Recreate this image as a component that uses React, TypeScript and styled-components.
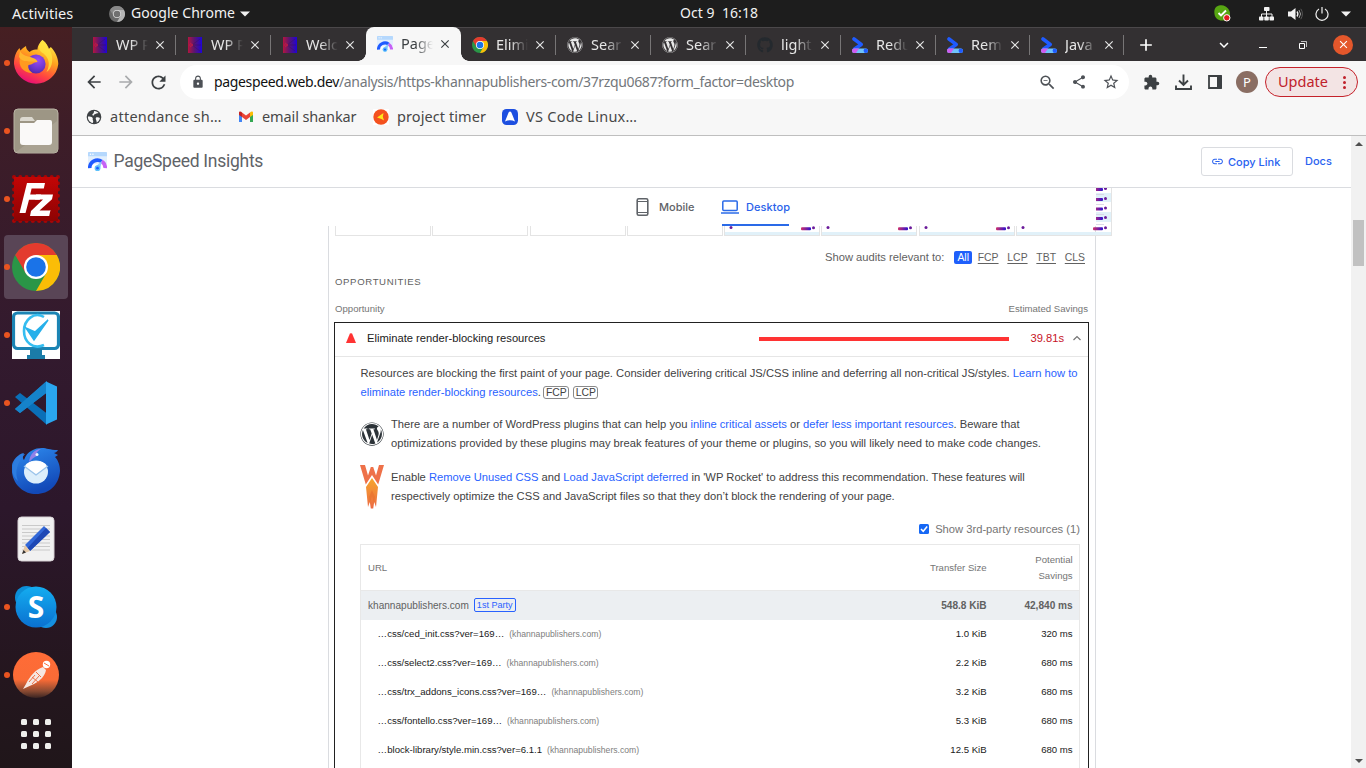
import React from "react";
import styled, { createGlobalStyle } from "styled-components";
import {
  MdArrowBack, MdArrowForward, MdRefresh, MdLock, MdOutlineZoomOut, MdShare, MdStarBorder,
  MdExtension, MdLink, MdClose, MdAdd, MdExpandMore,
} from "react-icons/md";
import { FaWordpress, FaGithub } from "react-icons/fa";

const ui = `"Noto Sans", "Open Sans", sans-serif`;
const arial = `"Liberation Sans", Arial, sans-serif`;
const product = `Inter, Roboto, sans-serif`;

const GlobalStyle = createGlobalStyle`
  * { box-sizing: border-box; }
  body { margin: 0; background: #fff; overflow: hidden; }
  svg { display: block; flex: none; }
`;

const Screen = styled.div`
  width: 1366px;
  height: 768px;
  overflow: hidden;
  display: flex;
  flex-direction: column;
  font-family: ${ui};
`;

/* ---------- GNOME top bar ---------- */
const TopBar = styled.header`
  height: 27px;
  flex: none;
  background: #1d1d1d;
  color: #f2f2f2;
  display: grid;
  grid-template-columns: 680px auto 1fr;
  align-items: center;
  font-size: 14px;
  white-space: pre;
`;
const TopLeft = styled.div`
  display: flex;
  align-items: center;
  padding-left: 12px;
`;
const Activities = styled.span`
  width: 97px;
  padding-bottom: 2px;
  font-size: 14.5px;
  letter-spacing: 0.1px;
`;
const AppName = styled.span`
  margin: 0 5px 0 6px;
  padding-bottom: 2px;
  letter-spacing: 0.05px;
`;
const Clock = styled.span`
  padding-bottom: 2px;
  letter-spacing: 0.05px;
`;
const Tray = styled.div`
  display: flex;
  justify-content: flex-end;
  padding-right: 9px;
`;
const Slot = styled.div<{ $w: number; $color?: string }>`
  width: ${(p) => p.$w}px;
  flex: none;
  display: flex;
  align-items: center;
  justify-content: center;
  color: ${(p) => p.$color || "inherit"};
`;

/* ---------- dock ---------- */
const Desktop = styled.div`
  flex: 1;
  display: flex;
  min-height: 0;
`;
const Dock = styled.nav`
  width: 72px;
  flex: none;
  padding-top: 2px;
  background: linear-gradient(#461f22 0%, #3d1d28 14%, #331a2e 42%, #2c172b 65%, #24161e 88%, #20161a 100%);
`;
const DockItem = styled.div<{ $active?: boolean }>`
  height: 64px;
  margin: 2px 4px 4px;
  border-radius: 4px;
  display: flex;
  align-items: center;
  background: ${(p) => (p.$active ? "#594556" : "transparent")};
`;
const RunningDot = styled.i<{ $on: boolean }>`
  width: 6px;
  height: 6px;
  border-radius: 50%;
  margin-right: 2px;
  background: ${(p) => (p.$on ? "#e95420" : "transparent")};
`;
const AppGrid = styled.div`
  display: grid;
  grid-template-columns: repeat(3, 6px);
  gap: 6px;
  margin: 12px 0 0 21px;
`;
const AppDot = styled.i`
  height: 6px;
  border-radius: 1.5px;
  background: #efefec;
`;

/* ---------- browser chrome ---------- */
const Browser = styled.main`
  flex: 1;
  min-width: 0;
  display: flex;
  flex-direction: column;
`;
const TabStrip = styled.div`
  height: 34px;
  flex: none;
  background: #333032;
  border-top: 1px solid #4b484a;
  display: flex;
  padding-left: 9px;
  color: #fff;
`;
const Tab = styled.div<{ $active?: boolean; $line?: boolean; $w?: number }>`
  position: relative;
  width: ${(p) => p.$w || 95}px;
  flex: none;
  display: flex;
  align-items: center;
  padding-left: 11px;
  height: ${(p) => (p.$active ? 34 : 33)}px;
  margin-top: ${(p) => (p.$active ? -1 : 0)}px;
  color: ${(p) => (p.$active ? "#3c4043" : "#e6e6e6")};
  background: ${(p) => (p.$active ? "#f7f7f7" : "transparent")};
  border-radius: 8px 8px 0 0;
  &::after {
    content: "";
    position: absolute;
    right: 0;
    top: 7px;
    width: 1px;
    height: 20px;
    background: ${(p) => (p.$line ? "#777576" : "transparent")};
  }
`;
const Flare = styled.i<{ $side: "left" | "right" }>`
  position: absolute;
  bottom: 0;
  ${(p) => p.$side}: -8px;
  width: 8px;
  height: 8px;
  background: radial-gradient(circle at ${(p) => (p.$side === "left" ? "0 0" : "100% 0")}, transparent 7.5px, #f7f7f7 8px);
`;
const TabTitle = styled.span`
  width: 32px;
  margin: 0 5px 0 8px;
  padding-bottom: 2px;
  overflow: hidden;
  white-space: pre;
  font-size: 14.5px;
  line-height: 22px;
  mask-image: linear-gradient(90deg, #000 45%, transparent 100%);
`;
const WindowControls = styled.div`
  margin-left: auto;
  display: flex;
`;
const Minimise = styled.i`
  width: 8px;
  height: 1px;
  margin-top: 5px;
  background: #fff;
`;
const CloseWindow = styled.div`
  width: 20px;
  height: 20px;
  border-radius: 50%;
  background: #e4572b;
  display: grid;
  place-items: center;
`;
const Toolbar = styled.div`
  height: 38px;
  flex: none;
  background: #f7f7f7;
  display: flex;
  align-items: center;
  padding: 4px 8px 0 6px;
  color: #3c4043;
`;
const Omnibox = styled.div`
  width: 949px;
  height: 34px;
  margin: 0 6px;
  border-radius: 17px;
  background: #fff;
  display: flex;
  align-items: center;
  padding: 0 2px 0 10px;
  color: #4d5156;
`;
const Url = styled.span`
  flex: 1;
  margin-left: 8px;
  padding-bottom: 2px;
  font-size: 14px;
  letter-spacing: -0.355px;
  color: #73777b;
  white-space: nowrap;
  b { font-weight: 400; color: #111; }
`;
const Avatar = styled.div`
  width: 22px;
  height: 22px;
  border-radius: 50%;
  background: #8a6e63;
  color: #fff;
  font-size: 13px;
  line-height: 22px;
  text-align: center;
`;
const UpdateButton = styled.div`
  width: 93px;
  height: 30px;
  margin-left: 2px;
  border: 1px solid #c5222b;
  border-radius: 15px;
  background: #f3e4e4;
  color: #c0212b;
  display: flex;
  align-items: center;
  justify-content: space-between;
  padding: 0 11px 0 12px;
  font-size: 14.5px;
`;
const UpdateLabel = styled.span`
  padding-bottom: 2px;
`;
const Dots = styled.div`
  display: grid;
  gap: 2px;
  i { width: 3px; height: 3px; border-radius: 50%; background: #c0212b; }
`;
const Bookmarks = styled.div`
  height: 37px;
  flex: none;
  background: #f7f7f7;
  border-bottom: 1px solid #bfbfbf;
  display: flex;
  align-items: center;
  padding-left: 14px;
  color: #474747;
  font-size: 14.5px;
`;
const Bookmark = styled.div<{ $w: number }>`
  width: ${(p) => p.$w}px;
  display: flex;
  align-items: center;
  gap: 8px;
`;
const BookmarkName = styled.span<{ $ls: number }>`
  padding-bottom: 2px;
  white-space: nowrap;
  letter-spacing: ${(p) => p.$ls}px;
`;

/* ---------- page ---------- */
const Viewport = styled.div`
  flex: 1;
  min-height: 0;
  display: flex;
`;
const Page = styled.div`
  width: 1279px;
  flex: none;
  overflow: hidden;
  background: #fff;
`;
const PageHeader = styled.div`
  height: 52px;
  border-bottom: 1px solid #dadce0;
  display: flex;
  align-items: center;
  padding: 0 19px 1px 16px;
  font-family: ${product};
  font-size: 11px;
  font-weight: 500;
  color: #2962f0;
`;
const ProductName = styled.span`
  flex: 1;
  margin-left: 6.5px;
  font-family: Roboto, sans-serif;
  font-size: 17.5px;
  font-weight: 400;
  letter-spacing: -0.27px;
  color: #5f6368;
`;
const CopyLink = styled.div`
  width: 92px;
  height: 29px;
  border: 1px solid #dadce0;
  border-radius: 3px;
  margin-right: 12px;
  display: flex;
  align-items: center;
  padding: 1px 0 0 9px;
  gap: 4px;
`;
const Docs = styled.span`
  width: 27px;
`;
const FilmArea = styled.div`
  display: grid;
  height: 48px;
  padding-left: 256px;
`;
const Film = styled.div`
  grid-area: 1 / 1;
  width: 784px;
  height: 48px;
  padding-left: 7px;
  display: grid;
  grid-template-columns: repeat(8, 96px);
  grid-template-rows: 48px;
  justify-content: space-between;
`;
const Frame = styled.div`
  border: 1px solid #e4e4e4;
  border-top: 0;
  overflow: hidden;
`;
const DeviceNav = styled.div`
  grid-area: 1 / 1;
  z-index: 1;
  width: 768px;
  height: 38px;
  background: #fff;
  display: flex;
  padding-left: 308px;
  font-family: ${product};
  font-size: 11px;
  font-weight: 500;
`;
const DeviceTab = styled.div<{ $active?: boolean; $w: number }>`
  width: ${(p) => p.$w}px;
  padding-top: 2px;
  display: flex;
  align-items: center;
  gap: ${(p) => (p.$active ? 7 : 10)}px;
  margin-right: 19px;
  letter-spacing: ${(p) => (p.$active ? 0.1 : 0)}px;
  color: ${(p) => (p.$active ? "#2962ea" : "#5f6368")};
  border-bottom: 2px solid ${(p) => (p.$active ? "#2a6ae8" : "transparent")};
  white-space: nowrap;
  svg { margin-left: ${(p) => (p.$active ? -1 : 0)}px; }
`;
const Report = styled.section`
  width: 768px;
  height: 560px;
  margin: -10px 0 0 256px;
  padding: 22px 6px 0 5px;
  border: solid #dadce0;
  border-width: 0 1px;
  font-family: ${arial};
  font-size: 11.2px;
  line-height: 19px;
  color: #424242;
`;
const Filters = styled.div`
  display: flex;
  justify-content: flex-end;
  align-items: center;
  padding-right: 1px;
  height: 19px;
  color: #616161;
`;
const Filter = styled.span<{ $on?: boolean }>`
  font-size: 10.4px;
  line-height: 13px;
  padding: 0 3px;
  margin-left: ${(p) => (p.$on ? 10 : 2.8)}px;
  border-radius: 2px;
  text-decoration: ${(p) => (p.$on ? "none" : "underline")};
  text-underline-offset: 1.5px;
  background: ${(p) => (p.$on ? "#1f5ffb" : "transparent")};
  color: ${(p) => (p.$on ? "#fff" : "#616161")};
`;
const GroupTitle = styled.div`
  margin: 5px 0 0 1px;
  font-size: 9.6px;
  letter-spacing: 0.63px;
  color: #616161;
`;
const ColumnTitles = styled.div`
  display: flex;
  justify-content: space-between;
  margin: 8px 1px 4px;
  font-size: 9.6px;
  color: #757575;
`;
const Audit = styled.div`
  height: 500px;
  border: 1px solid #212121;
`;
const AuditHeader = styled.div`
  height: 34px;
  border-bottom: 1px solid #e6e6e6;
  display: flex;
  align-items: center;
  padding: 0 6px 3px 11px;
  color: #212121;
`;
const AuditTitle = styled.span`
  flex: 1;
  margin-left: 11px;
`;
const SavingsBar = styled.div`
  width: 250px;
  height: 4px;
  margin-top: 2px;
  background: #f33;
`;
const Savings = styled.span`
  width: 55px;
  margin-right: 8px;
  text-align: right;
  color: #c7131f;
`;
const AuditBody = styled.div`
  padding: 7px 8px 0 25px;
`;
const Text = styled.p<{ $inset?: boolean }>`
  margin: 0 0 0 ${(p) => (p.$inset ? 0.5 : 0)}px;
  white-space: nowrap;
`;
const Link = styled.a`
  color: #2962ff;
`;
const Chip = styled.span`
  display: inline-block;
  font-size: 10.4px;
  line-height: 11px;
  height: 13px;
  padding: 0 1.6px;
  margin: 0 4.3px 0 -0.6px;
  border: 1px solid #8a8a8a;
  border-radius: 3px;
`;
const StackPack = styled.div<{ $top: number }>`
  height: 38px;
  margin-top: ${(p) => p.$top}px;
  display: flex;
  align-items: center;
  gap: 7px;
`;
const ThirdParty = styled.div`
  height: 20px;
  margin-top: 13px;
  display: flex;
  justify-content: flex-end;
  align-items: center;
  gap: 6px;
  color: #757575;
`;
const Checkbox = styled.div`
  width: 10px;
  height: 10px;
  border-radius: 1.5px;
  background: #1668f5;
`;
const Table = styled.div`
  margin-top: 5px;
  height: 260px;
  border: 1px solid #e8e8e8;
  font-size: 9.6px;
  line-height: 16px;
`;
const Row = styled.div<{ $kind?: "head" | "group" }>`
  display: grid;
  grid-template-columns: 1fr 80px 86px;
  align-items: center;
  text-align: right;
  padding: 0 6.4px ${(p) => (p.$kind ? 0 : 2)}px 7px;
  height: ${(p) => (p.$kind === "head" ? 46 : 29)}px;
  font-size: ${(p) => (p.$kind === "group" ? 10.08 : 9.6)}px;
  background: ${(p) => (p.$kind === "group" ? "#eceff2" : "transparent")};
  color: ${(p) => (p.$kind ? (p.$kind === "head" ? "#757575" : "#616161") : "#212121")};
  border-bottom: ${(p) => (p.$kind === "head" ? "1px solid #e8e8e8" : "0")};
`;
const Cell = styled.span<{ $bold?: boolean }>`
  font-weight: ${(p) => (p.$bold ? 700 : 400)};
`;
const UrlCell = styled.div<{ $indent?: boolean }>`
  text-align: left;
  padding-left: ${(p) => (p.$indent ? 9.6 : 0)}px;
  display: flex;
  align-items: center;
  white-space: nowrap;
`;
const Host = styled.span`
  margin-left: 5px;
  font-size: 8.64px;
  color: #808080;
`;
const PartyBadge = styled.span`
  margin: 0 0 1px 5px;
  height: 14px;
  padding: 0 2px;
  border: 1px solid #2962ff;
  border-radius: 2px;
  font-size: 9.07px;
  line-height: 13px;
  color: #2962ff;
`;
const Scrollbar = styled.div`
  width: 15px;
  flex: none;
  background: #f1f1f1;
  display: flex;
  flex-direction: column;
  align-items: center;
  padding: 6px 0 5px;
`;
const Thumb = styled.div`
  width: 11px;
  height: 46px;
  margin-top: 74px;
  margin-bottom: auto;
  background: #c1c1c1;
`;

/* ---------- icons ---------- */
const ChromeIcon = ({ size, grey }: { size: number; grey?: boolean }) => {
  const c = grey ? ["#8a8a8a", "#6a6a6a", "#b5b5b5", "#707070", "#ddd"] : ["#e33b2e", "#2a9647", "#fbbd07", "#1a73e8", "#fff"];
  return (
    <svg width={size} height={size} viewBox="0 0 48 48">
      <circle cx="24" cy="24" r="24" fill={c[1]} />
      <path d="M24 24 L3.2 12 A24 24 0 0 1 44.8 12 Z" fill={c[0]} />
      <path d="M24 12 H44.8 A24 24 0 0 1 24 48 L34.4 30 Z" fill={c[2]} />
      <path d="M3.2 12 L13.6 30 L24 24 V12 Z" fill={c[0]} />
      <circle cx="24" cy="24" r="12" fill={c[4]} />
      <circle cx="24" cy="24" r="9.8" fill={c[3]} />
    </svg>
  );
};

const PsiIcon = ({ size }: { size: number }) => (
  <svg width={size} height={size} viewBox="0 0 20 20">
    <path d="M1 0h18a1 1 0 0 1 1 1v12H0V1a1 1 0 0 1 1-1z" fill="#e2effd" />
    <path d="M1 0h18a1 1 0 0 1 1 1v3.600H0V1a1 1 0 0 1 1-1z" fill="#b5d8fd" />
    <circle cx="2.600" cy="2.300" r=".8" fill="#fff" /><circle cx="5.200" cy="2.300" r=".8" fill="#fff" />
    <path d="M0 17h20v-4H0z" fill="#fff" opacity=".8" />
    <path d="M1.800 17A8.200 8.200 0 0 1 14.500 10" fill="none" stroke="#1f5bff" strokeWidth="3.800" />
    <path d="M14.300 9.900A8.200 8.200 0 0 1 18.200 17" fill="none" stroke="#c661f5" strokeWidth="3.800" />
    <path d="M7.200 16 L14.600 9.400 L12.800 17.400z" fill="#8ccbfa" />
    <circle cx="10" cy="17" r="3" fill="#5cc1fb" /><circle cx="10" cy="17" r="1.400" fill="#1f5bff" />
  </svg>
);

const RocketTabIcon = () => (
  <svg width="14" height="16" viewBox="0 0 14 16">
    <defs>
      <linearGradient id="wpr"><stop offset="0" stopColor="#b3153f" /><stop offset=".45" stopColor="#5b1670" /><stop offset="1" stopColor="#1f02d8" /></linearGradient>
    </defs>
    <path d="M0 0h14v16H0z" fill="url(#wpr)" />
    <path d="M4 8 12 2M4 8 12 14M5 8h8" stroke="#3a1460" strokeWidth="1" fill="none" opacity=".55" />
    <path d="M1 8h4M2 6l3 2-3 2" stroke="#e0203c" strokeWidth=".8" fill="none" opacity=".7" />
  </svg>
);

const LighthouseIcon = () => (
  <svg width="16" height="16" viewBox="0 0 16 16">
    <path d="M2 2l7.200 5.400L2.600 12" fill="none" stroke="#1f5bff" strokeWidth="3.600" strokeLinecap="round" strokeLinejoin="round" />
    <rect x="0" y="11.600" width="16" height="4.400" rx="2.200" fill="#6fc3fb" />
    <path d="M2.200 11.600H7L4 16H2.200a2.200 2.200 0 0 1 0-4.400z" fill="#cf5cf0" />
    <circle cx="13.800" cy="13.800" r="2.200" fill="#1f5bff" />
  </svg>
);

const FirefoxIcon = () => (
  <svg width="48" height="48" viewBox="0 0 48 48">
    <defs>
      <linearGradient id="ff" x1=".75" y1="0" x2=".3" y2="1"><stop offset="0" stopColor="#fff44a" /><stop offset=".4" stopColor="#ffa01e" /><stop offset=".72" stopColor="#ff4640" /><stop offset="1" stopColor="#e5087c" /></linearGradient>
      <radialGradient id="ffg" cx=".6" cy=".3" r=".8"><stop offset="0" stopColor="#9a4df5" /><stop offset=".6" stopColor="#6a35cc" /><stop offset="1" stopColor="#48279a" /></radialGradient>
    </defs>
    <path d="M30.500 1c4 3 5.200 6 5.800 9 1.500-.5 2.500-2 2.500-2 4.500 4.500 7.500 11 7.500 17A22.300 22.300 0 0 1 2 25C2 18 4 12.500 7.500 9c.3 1.500 1 2.500 1 2.500C10 10 12 8 14 7c0 3 1.500 4.500 3.500 6 3-2.500 6-2.500 8-2.500C25.500 7 28 3 30.500 1z" fill="url(#ff)" />
    <path d="M30.500 1c4 3 7 8 9 14 2 7 0 15-5 18 5-9 1-15-3-18.500-5-2-6-8-1-13.500z" fill="#ffe742" opacity=".75" />
    <circle cx="24" cy="25" r="9.600" fill="url(#ffg)" />
    <path d="M8 19c5 1 9-1 14 1 2 .8 3 1.800 3.500 3-4 0-5 3-9 3-1 3 1 6 4 8C11 34 6 27 8 19z" fill="#ff9a20" />
    <path d="M8 12c3 5 8 5 13 7 3 1 4 2.500 4.500 4C17 22 11 24 7 18z" fill="#ffb62e" />
  </svg>
);

const FilesIcon = () => (
  <svg width="48" height="48" viewBox="0 0 48 48">
    <rect x="2" y="2" width="44" height="44" rx="4" fill="#9d9685" stroke="#b9b3a4" strokeWidth="1" />
    <path d="M4 45 45 14v28a3 3 0 0 1-3 3z" fill="#a9a292" />
    <path d="M8 13a3 3 0 0 1 3-3h9l3 4H8z" fill="#dcd9d0" />
    <path d="M8 16h14l3-3h13a2 2 0 0 1 2 2v20a3 3 0 0 1-3 3H11a3 3 0 0 1-3-3z" fill="#faf9f8" />
  </svg>
);

const FileZillaIcon = () => (
  <svg width="48" height="48" viewBox="0 0 48 48">
    <defs><linearGradient id="fz" x2="0" y2="1"><stop offset="0" stopColor="#c30505" /><stop offset="1" stopColor="#8d0303" /></linearGradient></defs>
    <rect x="2" y="2" width="44" height="44" fill="none" stroke="#a80505" strokeWidth="4" strokeDasharray="0.01 6.276" strokeLinecap="round" />
    <rect x="2" y="2" width="44" height="44" fill="url(#fz)" />
    <path d="M15 8h18l-1.200 5.500H19.600l-1.400 6H29l-1.200 5.300H17L13.500 38H7.500z" fill="#fff" />
    <path d="M24 19.500h17l-1 4.800L27.500 35.500h10l1-.5-1.300 6H18l1-5L31 24.500h-8z" fill="#fff" />
  </svg>
);

const MonitorIcon = () => (
  <svg width="48" height="48" viewBox="0 0 48 48">
    <path d="M0 0h48v48H0z" fill="#fff" />
    <rect x="1.500" y="2" width="45" height="35.500" rx="4" fill="#fff" stroke="#1b84b4" strokeWidth="3.200" />
    <path d="M18 38h12v6h3v4H15v-4h3z" fill="#1b7ca8" />
    <path d="M32 6C22 0 12 9 12 20s9 19 20 14" fill="none" stroke="#35bdf0" strokeWidth="2.600" />
    <path d="M14 17l8 12L36 9l-13 12z" fill="#27b0ea" stroke="#27b0ea" strokeWidth="1.500" />
  </svg>
);

const CodeIcon = () => (
  <svg width="48" height="48" viewBox="0 0 48 48">
    <path d="M3 18l5-4 27 20.500V46z" fill="#0a6fb8" />
    <path d="M3 30l5 4 27-20.500V2z" fill="#1686cf" />
    <path d="M34 2.500l11 5v33l-11 5z" fill="#2aa6ef" />
    <path d="M34 2.500V14L8 34l-5-4z" fill="#1583cb" />
  </svg>
);

const ThunderbirdIcon = () => (
  <svg width="48" height="48" viewBox="0 0 48 48">
    <defs><linearGradient id="tb" x2=".4" y2="1"><stop offset="0" stopColor="#2f8df0" /><stop offset="1" stopColor="#1249b8" /></linearGradient></defs>
    <path d="M0 18c1-5 6-11 12-12-2 3-1 6 0 7C15 4 23 1 30 1c5 0 7 2 16 2-1 2-3 3-4 3l4 2-3 2c3 3 5 8 5 14-1 14-11 23-24 23S-2 36 0 18z" fill="url(#tb)" />
    <path d="M13 7C6 15 2 24 6 34-1 29-1 20 3 14c2-4 5-7 10-7z" fill="#2d7de0" />
    <path d="M17 15c1-8 6-13 12-13-4 2-5 5-4 7-3 1-5 3-8 6z" fill="#9181e8" />
    <ellipse cx="24" cy="25" rx="12" ry="11.500" fill="#dceefb" />
    <path d="M13 20l11 7 11-7c0-3-4-6-11-6s-11 3-11 6z" fill="#fff" />
    <path d="M12 19l12 9 12-9" fill="none" stroke="#9bc3ea" strokeWidth="1.200" />
    <circle cx="25" cy="7.500" r="1.500" fill="#eaf5ff" />
  </svg>
);

const EditorIcon = () => (
  <svg width="48" height="48" viewBox="0 0 48 48">
    <rect x="6" y="2" width="36" height="44" rx="3.500" fill="#f1f1f1" stroke="#d6d0d4" />
    <path d="M10 10.500h28M10 14h28M10 17.500h28M10 21h28M10 24.500h28M10 28h28M10 31.500h28M10 35h28" stroke="#c9c9c9" strokeWidth="1" />
    <path d="M32 11l6 6-20 19-5-6z" fill="#3268d8" />
    <path d="M34 13l4 4-20 19-2.500-3z" fill="#1e48b5" />
    <path d="M13 30l5 6-8 3z" fill="#e5c9a8" /><path d="M11.500 35l2.500 2.500-4 1.500z" fill="#333" />
  </svg>
);

const SkypeIcon = () => (
  <svg width="48" height="48" viewBox="0 0 48 48">
    <defs><linearGradient id="sk" x2="0" y2="1"><stop offset="0" stopColor="#14adf0" /><stop offset="1" stopColor="#0a70d0" /></linearGradient></defs>
    <circle cx="14.500" cy="14.500" r="11.500" fill="#0c8fd8" /><circle cx="34" cy="34" r="11" fill="#1590e0" />
    <circle cx="24" cy="24" r="20.500" fill="url(#sk)" />
    <text x="24" y="35" textAnchor="middle" fontFamily="Open Sans, sans-serif" fontWeight="700" fontSize="30" fill="#fff">S</text>
  </svg>
);

const PostmanIcon = () => (
  <svg width="48" height="48" viewBox="0 0 48 48">
    <defs><linearGradient id="pm" x2="0" y2="1"><stop offset="0" stopColor="#ff6c37" /><stop offset=".6" stopColor="#fa6b36" /><stop offset=".85" stopColor="#8a4a32" /><stop offset="1" stopColor="#3a2422" /></linearGradient></defs>
    <circle cx="24" cy="24" r="23" fill="url(#pm)" />
    <circle cx="34.500" cy="13.500" r="3.700" fill="#fff" />
    <path d="M31 16l3 3c-1 6-6 11-12 14L11 38l3-5c4-8 9-14 17-17z" fill="#f6e8e2" />
    <path d="M17 31l6-7M20 33l7-8M20 26l6 5M24 21l5 5" stroke="#ef7046" strokeWidth="1" />
    <path d="M32 12l5 3" stroke="#ff6c37" strokeWidth="1" />
  </svg>
);

const WpRocketIcon = () => (
  <svg width="24" height="44" viewBox="0 0 24 44">
    <defs><linearGradient id="fl" x2="0" y2="1"><stop offset="0" stopColor="#f6a62c" /><stop offset="1" stopColor="#ec6a44" /></linearGradient></defs>
    <path d="M0 0h5l3 10.500L10.800 2h2.400L16 10.500 19 0h5l-5.800 19.500L12 10 5.800 19.500z" fill="#ee7149" />
    <path d="M12 13l6 9L16 42l-1.800-5-1 6.500h-2.400l-1-6.500L8 42 6 22z" fill="url(#fl)" />
    <path d="M12 25l3 7-1 6-2-7-2 7-1-6z" fill="#e8722f" opacity=".7" />
  </svg>
);

const Marks = ({ y }: { y: number }) => (
  <>
    <rect x="76" y={y} width="10" height="3" rx="1" fill="url(#mark)" />
    <circle cx="88.500" cy={y + 0.5} r="1.500" fill="#6b1b9a" />
  </>
);
const FrameShot = ({ last }: { last: boolean }) => (
  <svg width="94" height="48" viewBox="0 0 94 48">
    <defs><linearGradient id="mark"><stop offset="0" stopColor="#d0306a" /><stop offset="1" stopColor="#2b10d0" /></linearGradient></defs>
    {last && (
      <>
        <path d="M70 5h24v9H70zM70 24h24v10H70z" fill="#e1f1f9" />
        <path d="M78 6.500h9M78 16.500h9M78 26.500h9M78 36.500h9" stroke="#d5cfe2" strokeWidth=".8" />
        <Marks y={0} /><Marks y={10} /><Marks y={19.500} /><Marks y={29} />
      </>
    )}
    <circle cx="6" cy="39.500" r="1.500" fill="#6b1b9a" />
    <Marks y={39.300} />
    <rect y="44" width="94" height="4" fill="#e1f1f9" />
  </svg>
);

const rows = [
  ["…css/ced_init.css?ver=169…", "1.0 KiB", "320 ms"],
  ["…css/select2.css?ver=169…", "2.2 KiB", "680 ms"],
  ["…css/trx_addons_icons.css?ver=169…", "3.2 KiB", "680 ms"],
  ["…css/fontello.css?ver=169…", "5.3 KiB", "680 ms"],
  ["…block-library/style.min.css?ver=6.1.1", "12.5 KiB", "680 ms"],
];

const wp = <FaWordpress size={16} color="#e8e8e8" />;
const tabs: { icon: React.ReactNode; title: string; active?: boolean; line?: boolean; w?: number }[] = [
  { icon: <Slot $w={16}><RocketTabIcon /></Slot>, title: "WP P", line: true },
  { icon: <Slot $w={16}><RocketTabIcon /></Slot>, title: "WP P", line: true },
  { icon: <Slot $w={16}><RocketTabIcon /></Slot>, title: "Welc" },
  { icon: <PsiIcon size={16} />, title: "Page", active: true },
  { icon: <ChromeIcon size={16} />, title: "Elimi", line: true },
  { icon: wp, title: "Sear", line: true },
  { icon: wp, title: "Sear", line: true },
  { icon: <FaGithub size={16} color="#24292e" />, title: "light", line: true },
  { icon: <LighthouseIcon />, title: "Redu", line: true },
  { icon: <LighthouseIcon />, title: "Rem", line: true, w: 94 },
  { icon: <LighthouseIcon />, title: "Java", line: true, w: 94 },
];

const dock: [React.ReactNode, boolean, boolean][] = [
  [<FirefoxIcon />, true, false],
  [<FilesIcon />, true, false],
  [<FileZillaIcon />, true, false],
  [<ChromeIcon size={48} />, true, true],
  [<MonitorIcon />, true, false],
  [<CodeIcon />, true, false],
  [<ThunderbirdIcon />, false, false],
  [<EditorIcon />, false, false],
  [<SkypeIcon />, true, false],
  [<PostmanIcon />, true, false],
];

export default function App() {
  return (
    <Screen>
      <GlobalStyle />
      <TopBar>
        <TopLeft>
          <Activities>Activities</Activities>
          <ChromeIcon size={16} grey />
          <AppName>Google Chrome</AppName>
          <svg width="10" height="6" viewBox="0 0 10 6"><path d="M0 .5h10L5 5.500z" fill="#f2f2f2" /></svg>
        </TopLeft>
        <Clock>Oct 9  16:18</Clock>
        <Tray>
          <Slot $w={60}>
            <svg width="17" height="17" viewBox="0 0 17 17">
              <path d="M5 .5C9-.5 12 1 14 3.500c2 2.500 2.500 5 1.500 8.500-1 3-4 4-7.500 3.500C4 15.500 1 13 .5 9 0 6 .5 1.500 5 .5z" fill="#57a512" />
              <path d="M4.500 8l2.500 2.500 5-5" stroke="#fff" strokeWidth="1.900" fill="none" />
              <circle cx="12.800" cy="12.800" r="3.200" fill="#e11b22" stroke="#fff" strokeWidth="1" />
            </svg>
          </Slot>
          <Slot $w={29}>
            <svg width="15" height="14" viewBox="0 0 15 14" fill="#f2f2f2">
              <rect x="5" y="0" width="5.500" height="4" rx=".8" /><rect x="0" y="9.500" width="4.500" height="4" rx=".8" /><rect x="5.300" y="9.500" width="4.500" height="4" rx=".8" /><rect x="10.500" y="9.500" width="4.500" height="4" rx=".8" />
              <path d="M7.500 4v6M2.500 10V7h10.500v3" stroke="#f2f2f2" fill="none" />
            </svg>
          </Slot>
          <Slot $w={28}>
            <svg width="15" height="14" viewBox="0 0 15 14">
              <path d="M0 4.500h3L7.500 1v12L3 9.500H0z" fill="#f2f2f2" />
              <path d="M9 4.500q1.800 2.500 0 5" stroke="#f2f2f2" strokeWidth="1.300" fill="none" />
              <path d="M11 3q3 4 0 8" stroke="#aaa" strokeWidth="1" fill="none" />
              <path d="M12.800 1.800q3.200 5 0 10.400" stroke="#666" strokeWidth=".8" fill="none" />
            </svg>
          </Slot>
          <Slot $w={26}>
            <svg width="14" height="14" viewBox="0 0 14 14" fill="none" stroke="#f2f2f2" strokeWidth="1.200">
              <path d="M4 2.100a6 6 0 1 0 6 0M7 0v6.500" />
            </svg>
          </Slot>
          <Slot $w={22}>
            <svg width="10" height="6" viewBox="0 0 10 6"><path d="M0 .5h10L5 5.500z" fill="#f2f2f2" /></svg>
          </Slot>
        </Tray>
      </TopBar>

      <Desktop>
        <Dock>
          {dock.map(([icon, running, active], i) => (
            <DockItem key={i} $active={active}>
              <RunningDot $on={running} />
              {icon}
            </DockItem>
          ))}
          <AppGrid>{Array.from({ length: 9 }, (_, i) => <AppDot key={i} />)}</AppGrid>
        </Dock>

        <Browser>
          <TabStrip>
            {tabs.map((t, i) => (
              <Tab key={i} $active={t.active} $line={t.line} $w={t.w}>
                {t.active && <><Flare $side="left" /><Flare $side="right" /></>}
                {t.icon}
                <TabTitle>{t.title}</TabTitle>
                <MdClose size={14} />
              </Tab>
            ))}
            <Slot $w={44}><MdAdd size={20} /></Slot>
            <WindowControls>
              <Slot $w={32}><MdExpandMore size={18} /></Slot>
              <Slot $w={46}><Minimise /></Slot>
              <Slot $w={34}>
                <svg width="8" height="8" viewBox="0 0 8 8" fill="none" stroke="#fff"><path d="M.5 2.500h5v5h-5z" /><path d="M2 .5h5.500V6" opacity=".7" /></svg>
              </Slot>
              <Slot $w={46}><CloseWindow><MdClose size={13} /></CloseWindow></Slot>
            </WindowControls>
          </TabStrip>

          <Toolbar>
            <Slot $w={32}><MdArrowBack size={20} /></Slot>
            <Slot $w={32} $color="#a9abad"><MdArrowForward size={20} /></Slot>
            <Slot $w={32}><MdRefresh size={21} /></Slot>
            <Omnibox>
              <Slot $w={16}><MdLock size={14} /></Slot>
              <Url><b>pagespeed.web.dev</b>/analysis/https-khannapublishers-com/37rzqu0687?form_factor=desktop</Url>
              <Slot $w={32}><MdOutlineZoomOut size={19} /></Slot>
              <Slot $w={32}><MdShare size={16} /></Slot>
              <Slot $w={32}><MdStarBorder size={18} /></Slot>
            </Omnibox>
            <Slot $w={32}><MdExtension size={17} /></Slot>
            <Slot $w={32}>
              <svg width="17" height="17" viewBox="0 0 17 17" fill="none" stroke="#3c4043" strokeWidth="1.900">
                <path d="M8.500.5v10M4 6.500l4.500 4.500L13 6.500M1 11.500V15h15v-3.500" />
              </svg>
            </Slot>
            <Slot $w={32}>
              <svg width="14" height="14" viewBox="0 0 14 14"><path d="M1 1h12v12H1z" fill="none" stroke="#3c4043" strokeWidth="1.800" /><path d="M9 1h5v12H9z" fill="#3c4043" /></svg>
            </Slot>
            <Slot $w={32}><Avatar>P</Avatar></Slot>
            <UpdateButton><UpdateLabel>Update</UpdateLabel><Dots><i /><i /><i /></Dots></UpdateButton>
          </Toolbar>

          <Bookmarks>
            <Bookmark $w={152}>
              <svg width="16" height="16" viewBox="0 0 16 16">
                <circle cx="8" cy="8" r="7.300" fill="#3c4043" />
                <path d="M2 7.500c2 .2 3.500 0 4.500 1.200.8 1-.3 1.800.5 2.800.4.600.2 1.800-.3 2.500C3.500 13.300 1.700 10.500 2 7.500zM8 2c2.500 0 3.600 1 4.500 2-1 .6-2 0-2.600.8-.5.700-1.800.3-2 1.300-.2.900-1.600.6-1.600-.3C6.300 4.700 8.300 4.400 8 2zM10 8.500c1.500-.6 3-.3 3.900.4-.3 2-1.500 3.600-3.200 4.500.2-1.700-1.700-3.800-.7-4.900z" fill="#f7f7f7" />
              </svg>
              <BookmarkName $ls={0.26}>attendance sh…</BookmarkName>
            </Bookmark>
            <Bookmark $w={135}>
              <svg width="16" height="16" viewBox="0 0 16 16">
                <path d="M1 4v9h3V7z" fill="#4285f4" /><path d="M15 4v9h-3V7z" fill="#34a853" />
                <path d="M4 3.500l4 3 4-3V8l-4 3-4-3z" fill="#ea4335" /><path d="M1 3.500C1 2 3 2 4 3.500V8L1 6z" fill="#c5221f" /><path d="M15 3.500C15 2 13 2 12 3.500V8l3-2z" fill="#fbbc04" />
              </svg>
              <BookmarkName $ls={-0.12}>email shankar</BookmarkName>
            </Bookmark>
            <Bookmark $w={129}>
              <svg width="16" height="16" viewBox="0 0 16 16"><path d="M0 0h16v16H0z" fill="#fff" /><circle cx="8" cy="8" r="7.700" fill="#f4511e" /><path d="M4 8.500L10.500 4 9.800 7.800 11 11.500 8.500 10z" fill="#ffe81a" /></svg>
              <BookmarkName $ls={0.08}>project timer</BookmarkName>
            </Bookmark>
            <Bookmark $w={140}>
              <svg width="16" height="16" viewBox="0 0 16 16"><rect width="16" height="16" rx="4.500" fill="#1d4fe0" /><path d="M8 2.500c1 0 1.300.8 1.800 2L13 12.500c-1.500-.8-3.300-1.200-5-1.200s-3.500.4-5 1.200l3.200-8C6.700 3.300 7 2.500 8 2.500z" fill="#fff" /></svg>
              <BookmarkName $ls={0.26}>VS Code Linux…</BookmarkName>
            </Bookmark>
          </Bookmarks>

          <Viewport>
            <Page>
              <PageHeader>
                <PsiIcon size={19} />
                <ProductName>PageSpeed Insights</ProductName>
                <CopyLink><MdLink size={13} />Copy Link</CopyLink>
                <Docs>Docs</Docs>
              </PageHeader>

              <FilmArea>
                <Film>
                  {Array.from({ length: 8 }, (_, i) => (
                    <Frame key={i}>{i > 3 && <FrameShot last={i === 7} />}</Frame>
                  ))}
                </Film>
                <DeviceNav>
                  <DeviceTab $w={67}>
                    <svg width="13" height="18" viewBox="0 0 13 18" fill="none" stroke="#5f6368">
                      <rect x="1.200" y=".8" width="10.600" height="16.400" rx="1.500" strokeWidth="1.600" /><path d="M1 3.500h11M1 14.500h11" strokeWidth="1.200" />
                    </svg>
                    Mobile
                  </DeviceTab>
                  <DeviceTab $w={67} $active>
                    <svg width="18" height="14" viewBox="0 0 18 14" fill="none" stroke="#2a6ae8" strokeWidth="1.500">
                      <rect x="1.800" y="1" width="14.400" height="9.500" rx="1" /><path d="M0 13h18" />
                    </svg>
                    Desktop
                  </DeviceTab>
                </DeviceNav>
              </FilmArea>

              <Report>
                <Filters>
                  Show audits relevant to:
                  <Filter $on>All</Filter><Filter>FCP</Filter><Filter>LCP</Filter><Filter>TBT</Filter><Filter>CLS</Filter>
                </Filters>
                <GroupTitle>OPPORTUNITIES</GroupTitle>
                <ColumnTitles><span>Opportunity</span><span>Estimated Savings</span></ColumnTitles>
                <Audit>
                  <AuditHeader>
                    <svg width="10" height="10" viewBox="0 0 10 10"><path d="M3.900 .6Q5 0 6.100 .6L10 10H0z" fill="#f33" /></svg>
                    <AuditTitle>Eliminate render-blocking resources</AuditTitle>
                    <SavingsBar />
                    <Savings>39.81s</Savings>
                    <svg width="10" height="8" viewBox="0 0 10 8" fill="none" stroke="#757575" strokeWidth="1.200"><path d="M1.500 6L5 2.500 8.500 6" /></svg>
                  </AuditHeader>
                  <AuditBody>
                    <Text $inset>
                      Resources are blocking the first paint of your page. Consider delivering critical JS/CSS inline and deferring all non-critical JS/styles. <Link>Learn how to</Link><br />
                      <Link>eliminate render-blocking resources</Link>. <Chip>FCP</Chip><Chip>LCP</Chip>
                    </Text>
                    <StackPack $top={13}>
                      <FaWordpress size={24} color="#2c3338" />
                      <Text>
                        There are a number of WordPress plugins that can help you <Link>inline critical assets</Link> or <Link>defer less important resources</Link>. Beware that<br />
                        optimizations provided by these plugins may break features of your theme or plugins, so you will likely need to make code changes.
                      </Text>
                    </StackPack>
                    <StackPack $top={15}>
                      <WpRocketIcon />
                      <Text>
                        Enable <Link>Remove Unused CSS</Link> and <Link>Load JavaScript deferred</Link> in 'WP Rocket' to address this recommendation. These features will<br />
                        respectively optimize the CSS and JavaScript files so that they don’t block the rendering of your page.
                      </Text>
                    </StackPack>
                    <ThirdParty>
                      <Checkbox><svg width="10" height="10" viewBox="0 0 10 10"><path d="M2 5l2.200 2.300L8.200 2.500" stroke="#fff" strokeWidth="1.500" fill="none" /></svg></Checkbox>
                      Show 3rd-party resources (1)
                    </ThirdParty>
                    <Table>
                      <Row $kind="head"><UrlCell>URL</UrlCell><Cell>Transfer Size</Cell><Cell>Potential<br />Savings</Cell></Row>
                      <Row $kind="group">
                        <UrlCell>khannapublishers.com<PartyBadge>1st Party</PartyBadge></UrlCell>
                        <Cell $bold>548.8 KiB</Cell><Cell $bold>42,840 ms</Cell>
                      </Row>
                      {rows.map(([url, size, ms]) => (
                        <Row key={url}>
                          <UrlCell $indent>{url}<Host>(khannapublishers.com)</Host></UrlCell>
                          <Cell>{size}</Cell><Cell>{ms}</Cell>
                        </Row>
                      ))}
                    </Table>
                  </AuditBody>
                </Audit>
              </Report>
            </Page>
            <Scrollbar>
              <svg width="8" height="4" viewBox="0 0 8 4"><path d="M4 0l4 4H0z" fill="#505050" /></svg>
              <Thumb />
              <svg width="8" height="4" viewBox="0 0 8 4"><path d="M4 4l4-4H0z" fill="#505050" /></svg>
            </Scrollbar>
          </Viewport>
        </Browser>
      </Desktop>
    </Screen>
  );
}
